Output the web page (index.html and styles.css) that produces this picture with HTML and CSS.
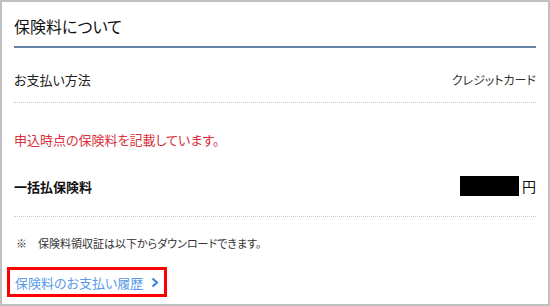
FILE: index.html
```html
<!DOCTYPE html>
<html lang="ja">
<head>
<meta charset="utf-8">
<link rel="stylesheet" href="styles.css">
</head>
<body>
<div class="panel">
  <h2 class="title">保険料について</h2>
  <div class="row pay">
    <span class="label">お支払い方法</span>
    <span class="value">クレジットカード</span>
  </div>
  <div class="section">
    <p class="warn">申込時点の保険料を記載しています。</p>
    <div class="row total">
      <span class="label strong">一括払保険料</span>
      <span class="amount"><span class="mask"></span><span class="yen">円</span></span>
    </div>
  </div>
  <p class="note">※　保険料領収証は以下からダウンロードできます。</p>
  <a class="history" href="#">保険料のお支払い履歴<svg class="chev" width="8" height="11" viewBox="0 0 8 11"><polyline points="1.5,1.5 6,5.5 1.5,9.5" fill="none" stroke="#2a86e0" stroke-width="2"/></svg></a>
</div>
</body>
</html>
```

FILE: styles.css
```css
* { box-sizing: border-box; }
html, body { margin: 0; padding: 0; background: #fff; }
body {
  font-family: "Noto Sans CJK JP", "Noto Sans", sans-serif;
  font-feature-settings: "palt";
  color: #222;
}
.panel {
  width: 550px;
  height: 306px;
  border: 2px solid #c0c0c0;
  padding: 0 12px;
  overflow: hidden;
}
.title {
  margin: 0;
  height: 46px;
  padding-top: 13px;
  font-size: 16px;
  line-height: 22px;
  font-weight: normal;
  color: #111;
  border-bottom: 2px solid #6482a4;
}
.row {
  display: flex;
  justify-content: space-between;
  align-items: center;
}
.pay {
  height: 55px;
  padding-top: 10px;
  border-bottom: 1px dotted #c8c8c8;
  font-size: 13px;
  line-height: 20px;
}
.label { color: #222; }
.value { color: #333; font-size: 12px; }
.section {
  border-bottom: 1px dotted #c8c8c8;
  height: 114px;
  padding-top: 27px;
}
.warn {
  margin: 0;
  font-size: 13px;
  line-height: 20px;
  color: #d8303c;
}
.total {
  margin-top: 25px;
  height: 22px;
}
.strong { font-size: 13px; font-weight: bold; color: #111; }
.amount { display: flex; align-items: center; }
.mask {
  display: inline-block;
  width: 59px;
  height: 20px;
  background: #000;
}
.yen { font-size: 14px; margin-left: 3px; color: #111; }
.note {
  margin: 16px 0 0 2px;
  font-size: 11px;
  line-height: 20px;
  color: #333;
}
.history {
  display: inline-flex;
  align-items: center;
  margin: 14px 0 0 -7px;
  height: 30px;
  padding: 0 5px 0 5px;
  border: 3px solid #ff0000;
  font-size: 13px;
  color: #5a9ae6;
  text-decoration: none;
}
.chev { margin-left: 8px; }
```
